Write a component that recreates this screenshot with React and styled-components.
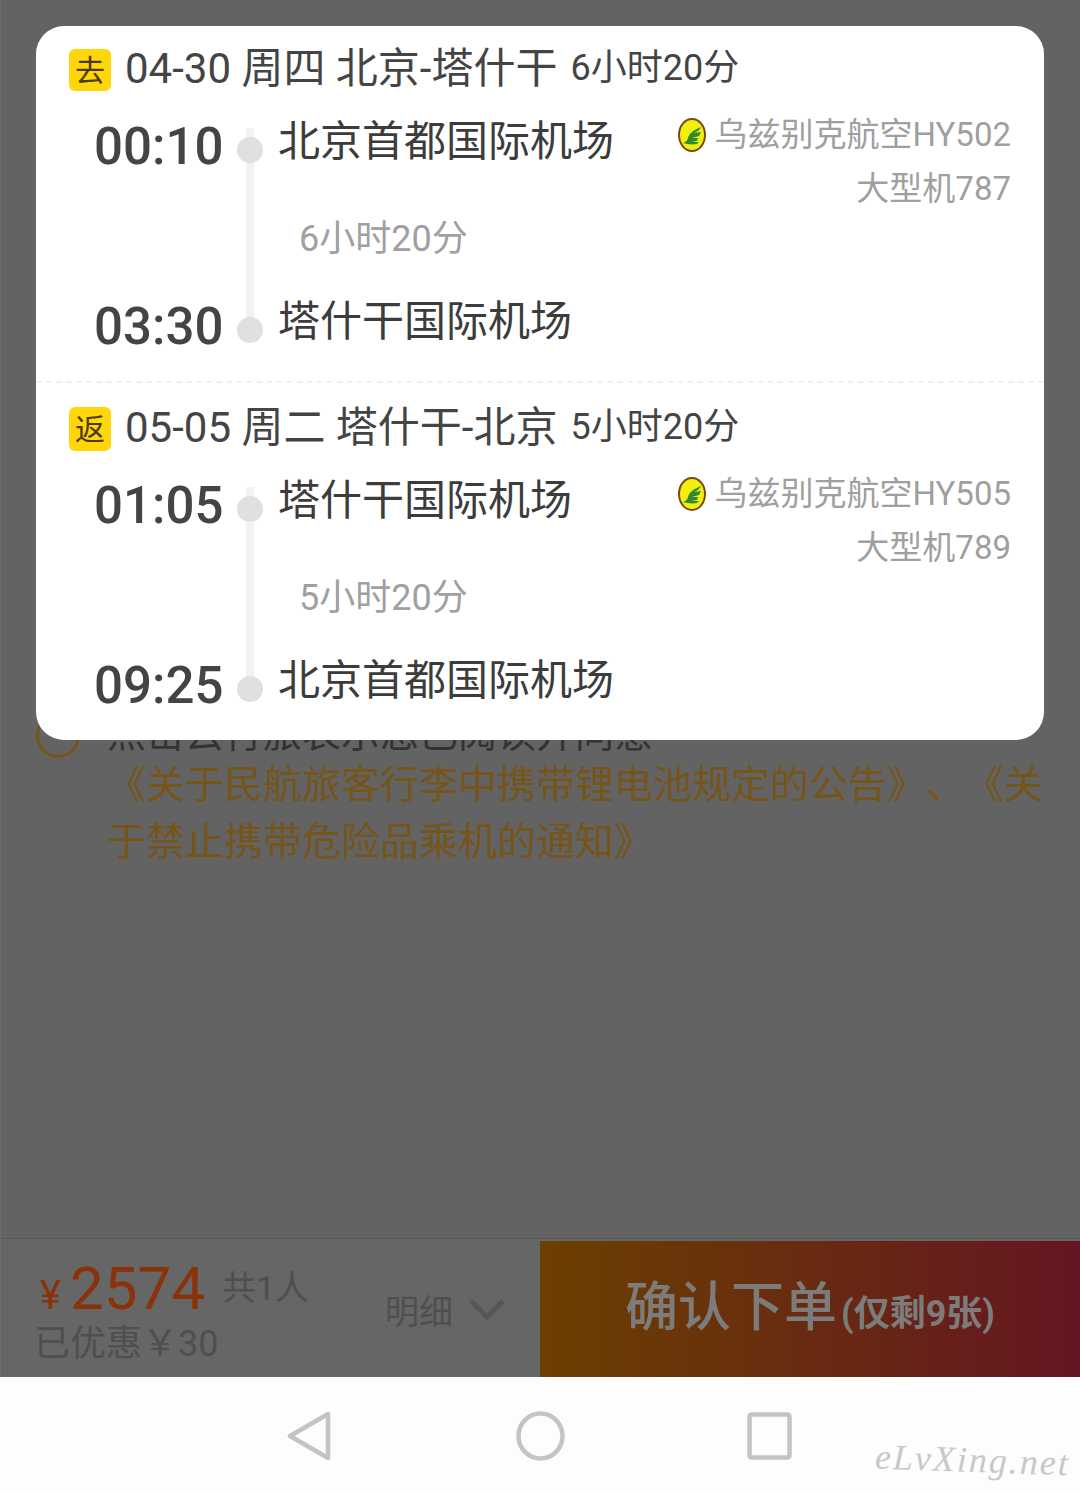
import React from 'react';
import styled, { createGlobalStyle } from 'styled-components';

const legs = [
    {
        tag: '去',
        date: '04-30 周四 北京-塔什干',
        total: '6小时20分',
        from: { time: '00:10', airport: '北京首都国际机场' },
        to: { time: '03:30', airport: '塔什干国际机场' },
        flight: '乌兹别克航空HY502',
        plane: '大型机787',
    },
    {
        tag: '返',
        date: '05-05 周二 塔什干-北京',
        total: '5小时20分',
        from: { time: '01:05', airport: '塔什干国际机场' },
        to: { time: '09:25', airport: '北京首都国际机场' },
        flight: '乌兹别克航空HY505',
        plane: '大型机789',
    },
];

const AirlineLogo = () => (
    <LogoSvg viewBox="0 0 28 34">
        <ellipse cx="14" cy="17" rx="13" ry="16" fill="#f2ee10" stroke="#7a4a10" strokeWidth="2" />
        <path d="M5 25c3-1 4-2 5-5 1-4 5-8 13-11-1 3-4 5-7 6l7-1-2 4-7 2 6 0-1 3-6 1 8 0-2 2c-5 1-10 0-14-1z" fill="#2f8a2c" />
    </LogoSvg>
);

const Leg = ({ leg, second }) => (
    <LegBlock $second={second}>
        <LegHeader>
            <Tag $second={second}>{leg.tag}</Tag>
            <LegDate>{leg.date}</LegDate>
            <LegTotal>{leg.total}</LegTotal>
        </LegHeader>
        <Route>
            <Time $row={1}>{leg.from.time}</Time>
            <Dot $row={1} $rail />
            <Airport $row={1}>{leg.from.airport}</Airport>
            <Carrier>
                <CarrierLine>
                    <AirlineLogo />
                    {leg.flight}
                </CarrierLine>
                <CarrierLine>{leg.plane}</CarrierLine>
            </Carrier>
            <Duration>{leg.total}</Duration>
            <Time $row={3}>{leg.to.time}</Time>
            <Dot $row={3} />
            <Airport $row={3}>{leg.to.airport}</Airport>
        </Route>
    </LegBlock>
);

const App = () => (
    <Page>
        <GlobalStyle />
        <Content>
            <Modal>
                <Leg leg={legs[0]} />
                <Leg leg={legs[1]} second />
            </Modal>
            <Notice>
                <NoticeCircle />
                <NoticeText>
                    <NoticeLead>点击云行旅表示您已阅读并同意</NoticeLead>
                    <NoticeLinks>
                        《关于民航旅客行李中携带锂电池规定的公告》、《关<br />于禁止携带危险品乘机的通知》
                    </NoticeLinks>
                </NoticeText>
            </Notice>
        </Content>
        <OrderBar>
            <PriceArea>
                <PriceBlock>
                    <PriceRow>
                        <Yen>¥</Yen>
                        <Price>2574</Price>
                        <People>共1人</People>
                    </PriceRow>
                    <Saved>已优惠￥30</Saved>
                </PriceBlock>
                <Details>
                    明细
                    <svg width="36" height="22" viewBox="0 0 36 22" fill="none">
                        <path d="M2 3l16 16L34 3" stroke="#565656" strokeWidth="5" />
                    </svg>
                </Details>
            </PriceArea>
            <ConfirmButton>
                确认下单<Remaining>(仅剩9张)</Remaining>
            </ConfirmButton>
        </OrderBar>
        <NavBar>
            <NavIcons>
                <svg width="48" height="50" viewBox="0 0 48 50" fill="none">
                    <path d="M41 3v44L3 25z" stroke="#c4c4c4" strokeWidth="4.5" strokeLinejoin="round" />
                </svg>
                <svg width="49" height="50" viewBox="0 0 49 50" fill="none">
                    <ellipse cx="24.5" cy="25" rx="22" ry="22.5" stroke="#c4c4c4" strokeWidth="4.5" />
                </svg>
                <svg width="46" height="48" viewBox="0 0 46 48" fill="none">
                    <rect x="3.5" y="2.5" width="40" height="43" rx="2" stroke="#c4c4c4" strokeWidth="4.5" />
                </svg>
            </NavIcons>
            <Watermark>eLvXing.net</Watermark>
        </NavBar>
    </Page>
);

export default App;

const GlobalStyle = createGlobalStyle`
    html, body {
        margin: 0;
        padding: 0;
    }

    body {
        font-family: Roboto, "Noto Sans CJK SC", sans-serif;
        text-spacing-trim: space-all;
    }
`;

const Page = styled.div`
    width: 1080px;
    height: 1494px;
    display: flex;
    flex-direction: column;
    overflow: hidden;
    background: #636363;
`;

const Content = styled.div`
    position: relative;
    flex: 1;
    padding: 712px 36px 0;
    box-shadow: inset 1px 0 #6e6e6e;
`;

const Modal = styled.div`
    position: absolute;
    z-index: 2;
    top: 26px;
    left: 36px;
    width: 1008px;
    height: 714px;
    background: #fff;
    border-radius: 28px;
`;

const LegBlock = styled.section`
    height: ${props => (props.$second ? '359px' : '355px')};
    box-sizing: border-box;
    padding-top: ${props => (props.$second ? '14px' : '12px')};
    border-top: ${props => (props.$second ? '2px dashed #f0f0f0' : '0')};
`;

const LegHeader = styled.div`
    display: flex;
    align-items: center;
    height: 52px;
    padding-left: 33px;
    color: #444;
`;

const Tag = styled.span`
    width: 42px;
    height: ${props => (props.$second ? '44px' : '42px')};
    box-sizing: border-box;
    display: flex;
    align-items: center;
    justify-content: center;
    margin-top: 12px;
    padding-bottom: 5px;
    border-radius: 6px;
    background: #ffd60a;
    color: #4a3a00;
    font-size: 30px;
`;

const LegDate = styled.span`
    margin-left: 14px;
    font-size: 42px;
`;

const LegTotal = styled.span`
    margin-left: 13px;
    font-size: 36px;
`;

const Route = styled.div`
    display: grid;
    grid-template-columns: 127px 56px 1fr auto;
    grid-template-rows: 60px 120px 60px;
    margin-top: 25px;
    padding: 0 33px 0 59px;
    align-items: center;
`;

const Time = styled.div`
    grid-column: 1;
    grid-row: ${props => props.$row};
    margin: 3px 0 0 -1px;
    font-size: 51px;
    font-weight: 500;
    line-height: 60px;
    color: #444;
`;

const Dot = styled.div`
    grid-column: 2;
    grid-row: ${props => props.$row};
    position: relative;
    justify-self: center;
    width: 26px;
    height: 26px;
    margin-top: 10px;
    border-radius: 50%;
    background: #e0e0e0;

    &::before {
        content: '';
        display: ${props => (props.$rail ? 'block' : 'none')};
        position: absolute;
        z-index: -1;
        top: -9px;
        left: 9px;
        width: 8px;
        height: 190px;
        background: #f2f2f2;
    }
`;

const Airport = styled.div`
    grid-column: 3;
    grid-row: ${props => props.$row};
    margin-top: -15px;
    font-size: 42px;
    color: #3c3c3c;
    white-space: nowrap;
`;

const Carrier = styled.div`
    grid-column: 4;
    grid-row: 1 / span 2;
    align-self: start;
    margin-top: -7px;
    font-size: 33px;
    line-height: 54px;
    color: #9f9f9f;
    text-align: right;
`;

const CarrierLine = styled.div`
    display: flex;
    align-items: center;
    justify-content: flex-end;
    gap: 8px;
`;

const LogoSvg = styled.svg`
    width: 28px;
    height: 34px;
`;

const Duration = styled.div`
    grid-column: 3;
    grid-row: 2;
    margin-left: 21px;
    font-size: 36px;
    color: #a0a0a0;
`;

const Notice = styled.div`
    display: flex;
    align-items: flex-start;
    gap: 27px;
`;

const NoticeCircle = styled.div`
    flex: none;
    box-sizing: border-box;
    width: 44px;
    height: 44px;
    margin-top: 2px;
    border: 3px solid #765518;
    border-radius: 50%;
`;

const NoticeText = styled.div`
    font-size: 39px;
    line-height: 57px;
    white-space: nowrap;
`;

const NoticeLead = styled.div`
    margin: -6px 0;
    color: #333;
`;

const NoticeLinks = styled.div`
    color: #765518;
`;

const OrderBar = styled.div`
    display: flex;
    box-sizing: border-box;
    height: 139px;
    padding-top: 2px;
    border-top: 1px solid #575757;
    background: #666;
    box-shadow: inset 1px 0 #6e6e6e;
`;

const PriceArea = styled.div`
    width: 540px;
    display: flex;
    align-items: center;
    justify-content: space-between;
    box-sizing: border-box;
    padding: 0 35px 0 36px;
`;

const PriceBlock = styled.div`
    display: flex;
    flex-direction: column;
`;

const PriceRow = styled.div`
    display: flex;
    align-items: baseline;
    height: 74px;
    padding-top: 1px;
`;

const Yen = styled.span`
    margin-left: 4px;
    font-size: 40px;
    color: #8a3208;
`;

const Price = styled.span`
    margin-left: 9px;
    font-size: 60px;
    color: #8a3208;
`;

const People = styled.span`
    margin-left: 17px;
    font-size: 34px;
    color: #4f4f4f;
    position: relative;
    top: -9px;
`;

const Saved = styled.div`
    margin: -5px 0 0 -2px;
    font-size: 36px;
    line-height: 44px;
    color: #4f4f4f;
`;

const Details = styled.div`
    display: flex;
    align-items: center;
    gap: 16px;
    font-size: 34px;
    color: #4f4f4f;
`;

const ConfirmButton = styled.div`
    flex: 1;
    display: flex;
    align-items: baseline;
    justify-content: center;
    line-height: 134px;
    background: linear-gradient(90deg, #6b4000, #651522);
    color: #7c7c7c;
    font-size: 53px;
    font-weight: 500;
`;

const Remaining = styled.span`
    margin-left: 4px;
    font-size: 36px;
    font-weight: 700;
`;

const NavBar = styled.div`
    position: relative;
    height: 117px;
    background: #fdfdfd;
`;

const NavIcons = styled.div`
    display: flex;
    align-items: center;
    gap: 181px;
    padding: 34px 0 0 287px;
`;

const Watermark = styled.span`
    position: absolute;
    top: 62px;
    left: 875px;
    font-family: "Liberation Serif", serif;
    font-style: italic;
    font-size: 36px;
    letter-spacing: 2px;
    color: #c8c8c8;
    transform: rotate(2deg);
`;
